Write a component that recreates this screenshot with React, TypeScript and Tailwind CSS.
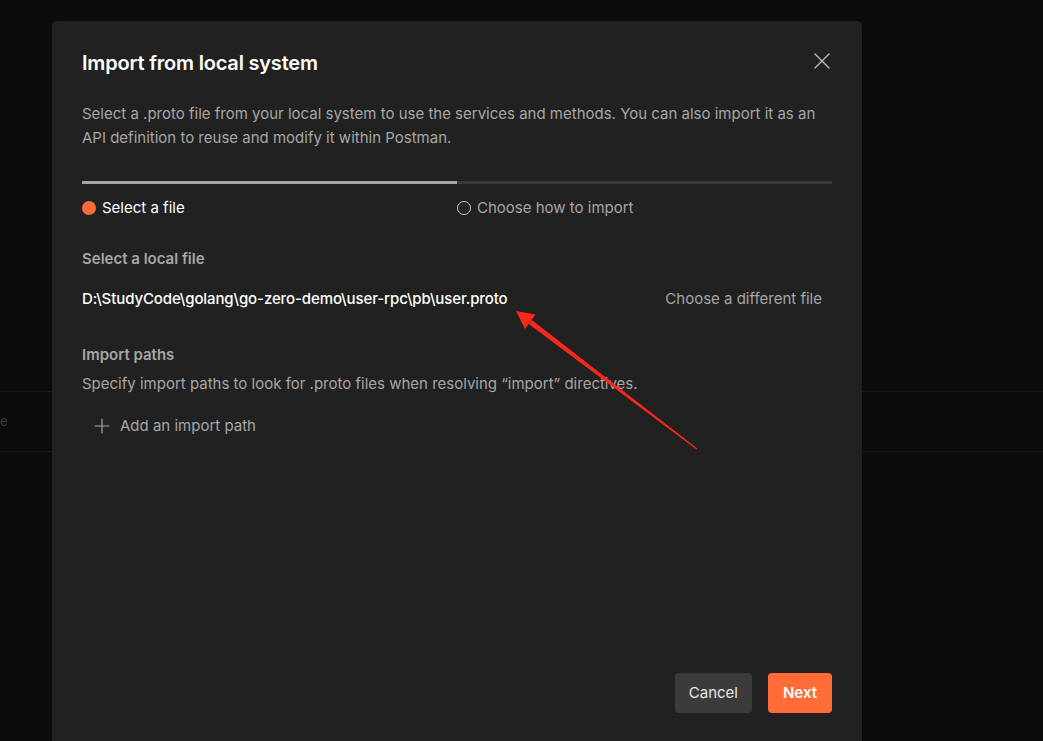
import React from 'react';
import { X, Plus } from 'lucide-react';

function StepBar() {
  return (
    <div className="mt-[31px]">
      <div className="flex h-[3px]">
        <div className="w-1/2 bg-[#a6a6a6]" />
        <div className="w-1/2 bg-[#3b3b3b]" />
      </div>
      <div className="flex mt-[14px] text-[15px] leading-[20px]">
        <div className="w-1/2 flex items-center gap-[6px] text-white">
          <span className="w-[14px] h-[14px] rounded-full bg-[#ff6c37]" />
          Select a file
        </div>
        <div className="w-1/2 flex items-center gap-[6px] text-[#a6a6a6]">
          <span className="w-[14px] h-[14px] rounded-full border border-[#c8c8c8]" />
          Choose how to import
        </div>
      </div>
    </div>
  );
}

function Arrow() {
  // red annotation drawn over the dialog
  return (
    <svg className="absolute left-0 top-0 pointer-events-none" width="1043" height="741">
      <path d="M528.8 323.9 L531.8 319.9 L697.4 448.4 L696.6 449.6 Z" fill="#f8281c" />
      <path d="M516 311 L535.5 314.5 L525 329 Z" fill="#f8281c" />
    </svg>
  );
}

export default function App() {
  return (
    <div className="relative w-[1043px] h-[741px] overflow-hidden bg-[#0b0b0b]" style={{ fontFamily: 'Inter, "Noto Sans", sans-serif' }}>
      {/* background app behind overlay */}
      <div className="h-[391px]" />
      <div className="h-[61px] border-t border-b border-[#1a1a1a] flex items-center">
        <span className="text-[13px] text-[#3a3a3a]">e</span>
      </div>

      <div className="absolute left-[52px] top-[21px] w-[810px] h-[740px] rounded-[5px] bg-[#212121] px-[30px] pt-[28px]">
        <div className="flex items-center justify-between">
          <h1 className="text-[20px] leading-[28px] font-semibold text-white tracking-[-0.2px]">Import from local system</h1>
          <X className="w-[28px] h-[28px] text-[#bdbdbd] -mr-[4px] -mt-[4px]" strokeWidth={1.1} />
        </div>

        <p className="mt-[25px] text-[15px] leading-[24px] text-[#a6a6a6]">
          Select a .proto file from your local system to use the services and methods. You can also import it as an API definition to reuse and modify it within Postman.
        </p>

        <StepBar />

        <div className="mt-[31px] text-[15px] leading-[20px] font-semibold text-[#a6a6a6]">Select a local file</div>
        <div className="mt-[20px] flex items-center justify-between text-[15px] leading-[20px]">
          <span className="text-white font-medium tracking-[-0.1px]">D:\StudyCode\golang\go-zero-demo\user-rpc\pb\user.proto</span>
          <span className="text-[#a6a6a6] mr-[10px]">Choose a different file</span>
        </div>

        <div className="mt-[36px] text-[15px] leading-[20px] font-semibold text-[#a6a6a6]">Import paths</div>
        <div className="mt-[9px] text-[15px] leading-[20px] text-[#a6a6a6]">
          Specify import paths to look for .proto files when resolving “import” directives.
        </div>
        <div className="mt-[20px] ml-[8px] flex items-center gap-[6px] text-[15px] leading-[24px] text-[#a6a6a6]">
          <Plus className="w-[24px] h-[24px]" strokeWidth={1.2} />
          Add an import path
        </div>

        <div className="absolute right-[30px] top-[652px] flex gap-[16px]">
          <button className="h-[40px] px-[14px] rounded-[4px] bg-[#3b3b3b] text-[#e6e6e6] text-[15px]">Cancel</button>
          <button className="h-[40px] px-[15px] rounded-[4px] bg-[#ff6c37] text-white text-[15px] font-semibold">Next</button>
        </div>
      </div>

      <Arrow />
    </div>
  );
}
